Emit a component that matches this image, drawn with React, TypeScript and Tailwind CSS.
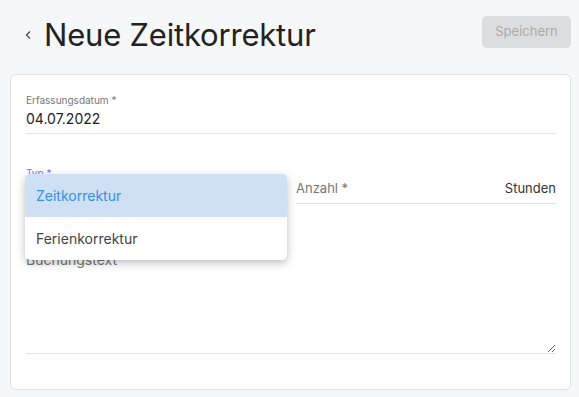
import React from 'react';

const App: React.FC = () => {
  return (
    <div className="min-h-[397px] bg-[#f6f7f9] font-['Inter',sans-serif] text-[#222]">
      <header className="flex justify-between pl-[22px] pr-[8px] pt-[16px] h-[74px] items-start">
        <div className="flex items-center gap-[10px] mt-[1px]">
          <svg width="12" height="14" viewBox="0 0 12 14" className="text-[#555]">
            <path d="M8 3.5 L4.5 7 L8 10.5" fill="none" stroke="currentColor" strokeWidth="1.4" />
          </svg>
          <h1 className="text-[31px] leading-[36px] text-[#222] tracking-[-0.2px]">Neue Zeitkorrektur</h1>
        </div>
        <button className="w-[89px] h-[32px] rounded-[5px] bg-[#dcdddf] text-[#aaa] text-[13px]">
          Speichern
        </button>
      </header>

      <div className="ml-[10px] mr-[8px] bg-white border border-[#dfe1e5] rounded-[6px] pl-[15px] pr-[14px] pt-[19px] pb-[35px]">
        <div className="border-b border-[#e3e4e6] pb-[5px]">
          <div className="text-[10px] leading-[12px] text-[#777]">Erfassungsdatum *</div>
          <div className="text-[14px] leading-[18px] mt-[4px] text-[#222]">04.07.2022</div>
        </div>

        <div className="flex gap-[8px] mt-[33px]">
          <div className="relative w-[262px]">
            <div className="text-[10px] leading-[12px] text-[#6b7cf0]">Typ *</div>
            <div className="h-[25px] border-b border-[#e3e4e6]" />
            <div className="absolute left-[-1px] top-[7px] w-[262px] rounded-[5px] bg-white shadow-[0_3px_8px_rgba(0,0,0,0.25)] overflow-hidden z-10">
              <div className="h-[43px] flex items-center px-[11px] bg-[#cfe0f4] text-[#3590e8] text-[14px]">Zeitkorrektur</div>
              <div className="h-[43px] flex items-center px-[11px] text-[#444] text-[14px]">Ferienkorrektur</div>
            </div>
          </div>
          <div className="flex-1 pt-[13px]">
            <div className="flex items-center justify-between h-[18px] text-[13px]">
              <span className="text-[#777]">Anzahl *</span>
              <span className="text-[#333]">Stunden</span>
            </div>
            <div className="h-[6px] border-b border-[#e3e4e6]" />
          </div>
        </div>

        <textarea
          placeholder="Buchungstext"
          className="block w-full mt-[45px] h-[105px] resize-y border-b border-[#e3e4e6] outline-none text-[14px] placeholder:text-[#777]"
        />
      </div>
    </div>
  );
};

export default App;
